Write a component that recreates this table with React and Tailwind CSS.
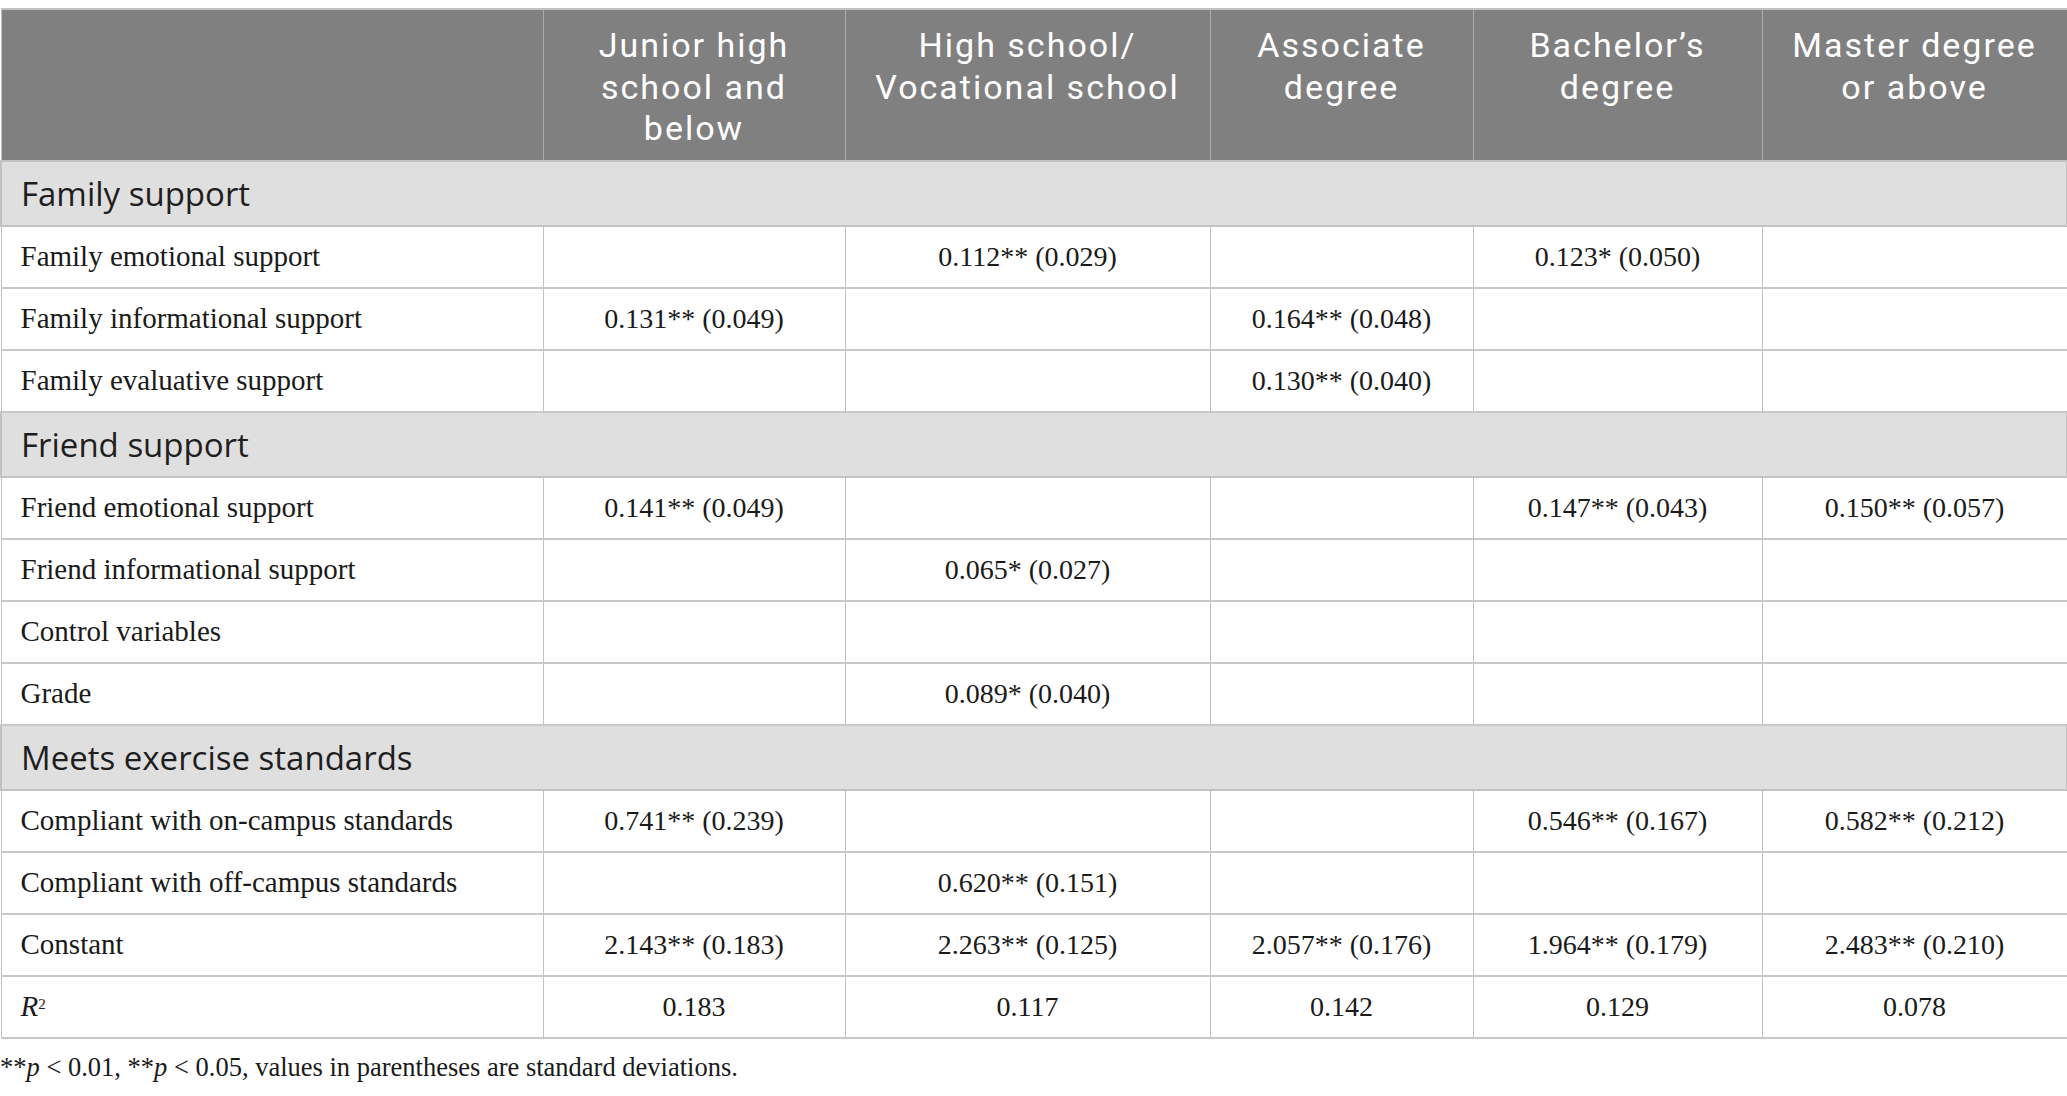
const cols = ['w-[542px]', 'w-[302px]', 'w-[365px]', 'w-[263px]', 'w-[289px]', 'w-[305px]']

const headers = [
  ['Junior high', 'school and', 'below'],
  ['High school/', 'Vocational school'],
  ['Associate', 'degree'],
  ['Bachelor\u2019s', 'degree'],
  ['Master degree', 'or above'],
]

const body = [
  { section: 'Family support' },
  { label: 'Family emotional support', vals: ['', '0.112** (0.029)', '', '0.123* (0.050)', ''] },
  { label: 'Family informational support', vals: ['0.131** (0.049)', '', '0.164** (0.048)', '', ''] },
  { label: 'Family evaluative support', vals: ['', '', '0.130** (0.040)', '', ''] },
  { section: 'Friend support' },
  { label: 'Friend emotional support', vals: ['0.141** (0.049)', '', '', '0.147** (0.043)', '0.150** (0.057)'] },
  { label: 'Friend informational support', vals: ['', '0.065* (0.027)', '', '', ''] },
  { label: 'Control variables', vals: ['', '', '', '', ''] },
  { label: 'Grade', vals: ['', '0.089* (0.040)', '', '', ''] },
  { section: 'Meets exercise standards' },
  { label: 'Compliant with on-campus standards', vals: ['0.741** (0.239)', '', '', '0.546** (0.167)', '0.582** (0.212)'] },
  { label: 'Compliant with off-campus standards', vals: ['', '0.620** (0.151)', '', '', ''] },
  { label: 'Constant', vals: ['2.143** (0.183)', '2.263** (0.125)', '2.057** (0.176)', '1.964** (0.179)', '2.483** (0.210)'] },
  { label: 'r2', vals: ['0.183', '0.117', '0.142', '0.129', '0.078'] },
]

function Label({ text }) {
  if (text === 'r2') {
    return (
      <span>
        <i>R</i>
        <sup className="text-[15px]">2</sup>
      </span>
    )
  }
  return text
}

export default function App() {
  return (
    <div className="w-[2067px] h-[1096px] bg-white pt-[8px]">
      <table className="w-[2067px] table-fixed border-collapse">
        <colgroup>
          {cols.map((c, i) => (
            <col key={i} className={c} />
          ))}
        </colgroup>
        <thead>
          <tr className="h-[152px] bg-[#7f807f]">
            <th className="border border-[#a9aaa9] border-t-2 border-t-[#c2c2c2] border-l-[#c2c2c2]" />
            {headers.map((lines, i) => (
              <th
                key={i}
                className="border border-[#a9aaa9] border-t-2 border-t-[#c2c2c2] align-top pt-[15px] px-1 text-center font-normal text-white text-[34px] tracking-[2px] leading-[41.5px] font-['Roboto','Open_Sans',sans-serif]"
              >
                {lines.map((l, j) => (
                  <div key={j} className="whitespace-nowrap">{l}</div>
                ))}
              </th>
            ))}
          </tr>
        </thead>
        <tbody>
          {body.map((row, i) =>
            row.section ? (
              <tr key={i} className="h-[65px] bg-[#e0dfe0]">
                <td
                  colSpan={6}
                  className="border-2 border-[#c2c2c2] px-[19px] text-left text-[33px] text-[#1e1e1e] font-['Open_Sans',sans-serif]"
                >
                  {row.section}
                </td>
              </tr>
            ) : (
              <tr key={i} className="h-[62px]">
                <td className="border-x border-y-2 border-x-[#c2c2c2] border-y-[#c8c8c8] px-[19px] text-left text-[29px] text-[#1a1a1a] font-['Liberation_Serif',serif]">
                  <Label text={row.label} />
                </td>
                {row.vals.map((v, j) => (
                  <td
                    key={j}
                    className="border-x border-y-2 border-x-[#c2c2c2] border-y-[#c8c8c8] text-center text-[28px] text-[#1a1a1a] font-['Liberation_Serif',serif]"
                  >
                    {v}
                  </td>
                ))}
              </tr>
            )
          )}
        </tbody>
      </table>
      <p className="mt-[9px] text-[26.5px] text-[#1a1a1a] font-['Liberation_Serif',serif]">
        **<i>p</i> &lt; 0.01, **<i>p</i> &lt; 0.05, values in parentheses are standard deviations.
      </p>
    </div>
  )
}
